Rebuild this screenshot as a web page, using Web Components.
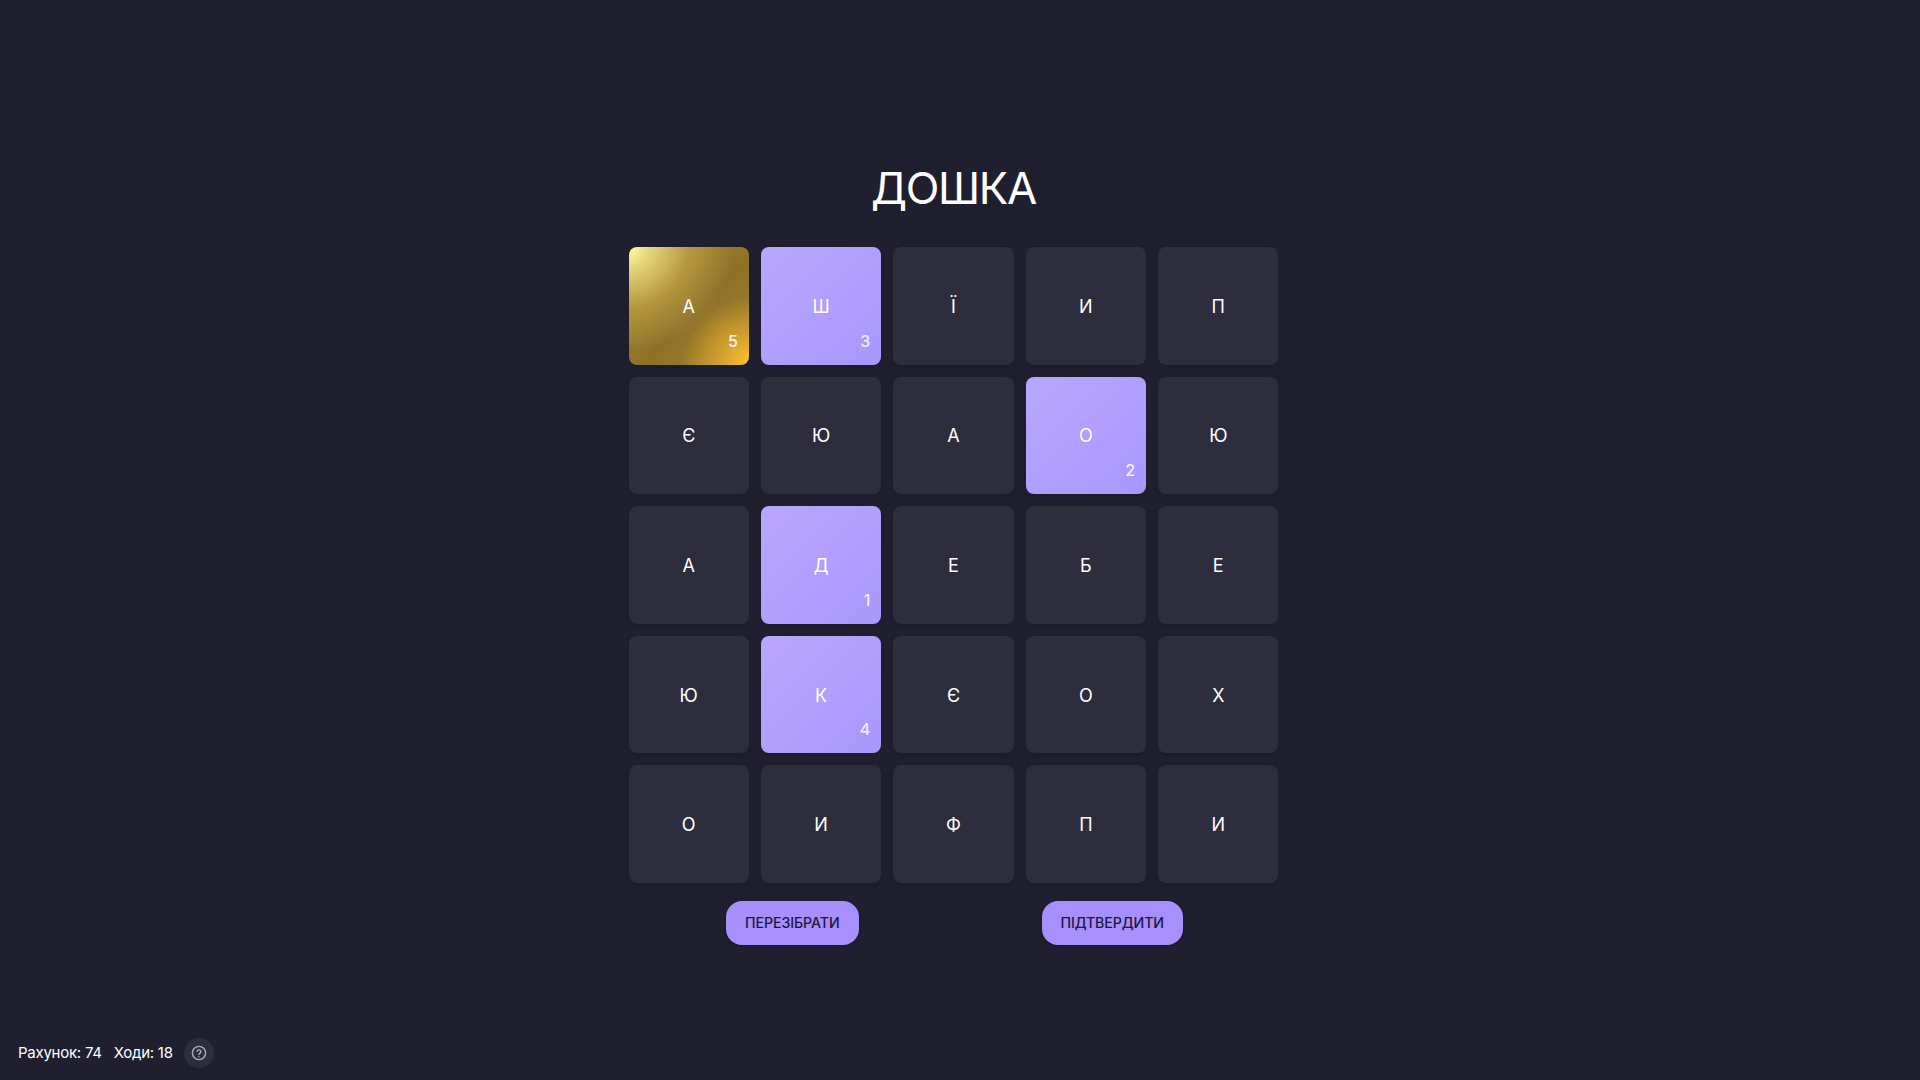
<!DOCTYPE html>
<html lang="uk"><head><meta charset="utf-8"><title>Дошка</title>
<style>
html,body{margin:0;height:100%;background:#1f1f2f;overflow:hidden}
body{font-family:Inter,"Noto Sans",sans-serif;color:#fff}
</style></head><body>
<template id="app-t"><style>
:host{display:flex;flex-direction:column;align-items:center;height:1080px;box-sizing:border-box;padding:0 13px 0 0}
h1{margin:163px 0 0;font:400 44px/50px Inter,sans-serif;letter-spacing:-1.3px;color:#fff;height:84px}
.actions{display:flex;gap:183px;margin-top:18px;padding-left:2px}
</style>
<h1>ДОШКА</h1>
<slot name="board"></slot>
<div class="actions"><slot name="action"></slot></div>
<slot name="status"></slot></template>

<template id="board-t"><style>
:host{display:grid;grid-template-columns:repeat(5,120.4px);grid-template-rows:repeat(5,117.6px);gap:12px}
</style><slot></slot></template>

<template id="tile-t"><style>
:host{display:flex;align-items:center;justify-content:center;position:relative;box-sizing:border-box;padding-top:2px;border-radius:8px;background:#2d2d3d;box-shadow:0 2px 4px rgba(0,0,0,.12);font:400 18px/1 Inter,sans-serif;color:#fff}
:host([state=sel]){background:linear-gradient(135deg,#b8a7ff,#a997fd)}
:host([state=gold]){background:radial-gradient(circle at 0 0,#fffca8 0,rgba(255,245,150,.72) 12%,rgba(215,185,85,.42) 36%,rgba(180,150,50,0) 62%),radial-gradient(circle at 100% 100%,#ffc22e 0,rgba(240,180,45,.75) 14%,rgba(190,150,45,0) 40%),linear-gradient(135deg,#a98c34,#8c7128 55%,#a38330)}
.n{position:absolute;right:11px;bottom:16px;font:500 16px/1 Inter,sans-serif;color:#f3efff}
</style><slot></slot><span class="n" id="n"></span></template>

<template id="btn-t"><style>
:host{display:flex;align-items:center;height:44px;padding:0 19px;border-radius:16px;background:#a78fff;color:#1b1840;font:500 14.2px/1 Inter,sans-serif;letter-spacing:-.1px;box-shadow:0 1px 3px rgba(0,0,0,.25)}
</style><slot></slot></template>

<template id="status-t"><style>
:host{display:flex;align-items:center;align-self:flex-start;gap:12px;margin-top:auto;margin-bottom:12px;margin-left:18px;font:400 15px/30px Inter,sans-serif;color:#fff;letter-spacing:-.25px}
.help{display:flex;width:30px;height:30px;border-radius:50%;background:#2d2d3d;align-items:center;justify-content:center;margin-left:-1px}
svg{width:16px;height:16px;fill:none;stroke:#b0b0bd;stroke-width:1.4;stroke-linecap:round;stroke-linejoin:round}
</style><slot></slot><span class="help"><svg viewBox="0 0 16 16"><circle cx="8" cy="8" r="6.6"/><path d="M6.1 6.2a1.95 1.95 0 0 1 3.8.5c0 1.3-1.9 1.6-1.9 2.7"/><path d="M8 11.6v.1"/></svg></span></template>

<script>
function def(name,t,init){customElements.define(name,class extends HTMLElement{
 constructor(){super();const r=this.attachShadow({mode:'open'});r.appendChild(document.getElementById(t).content.cloneNode(true));}
 connectedCallback(){if(init)init(this)}
})}
def('game-app','app-t');def('game-board','board-t');def('game-button','btn-t');def('game-status','status-t');
def('game-tile','tile-t',e=>{e.shadowRoot.getElementById('n').textContent=e.getAttribute('n')||''});
const rows=['А Ш Ї И П','Є Ю А О Ю','А Д Е Б Е','Ю К Є О Х','О И Ф П И'];
const marks={0:['gold',5],1:['sel',3],8:['sel',2],11:['sel',1],16:['sel',4]};
const app=document.createElement('game-app');
const board=document.createElement('game-board');board.slot='board';
rows.join(' ').split(' ').forEach((l,i)=>{const t=document.createElement('game-tile');t.textContent=l;
 if(marks[i]){t.setAttribute('state',marks[i][0]);t.setAttribute('n',marks[i][1])}board.appendChild(t)});
app.appendChild(board);
['ПЕРЕЗІБРАТИ','ПІДТВЕРДИТИ'].forEach(s=>{const b=document.createElement('game-button');b.slot='action';b.textContent=s;app.appendChild(b)});
const st=document.createElement('game-status');st.slot='status';
['Рахунок: 74','Ходи: 18'].forEach(s=>{const x=document.createElement('span');x.textContent=s;st.appendChild(x)});
app.appendChild(st);
document.body.appendChild(app);
</script></body></html>
